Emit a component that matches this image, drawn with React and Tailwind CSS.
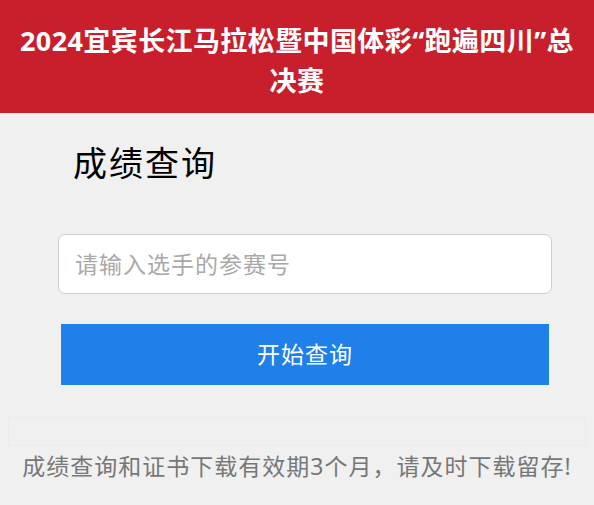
import React from "react";

export default function App() {
  return (
    <div
      className="w-[594px] h-[505px] bg-[#f0f0f0] overflow-hidden"
      style={{ fontFamily: '"Noto Sans", "Noto Sans CJK SC", sans-serif' }}
    >
      {/* Red banner */}
      <header className="bg-[#c91f2d] h-[113px] px-[8px] pt-[21px] text-center">
        <h1 className="text-white font-bold text-[27px] leading-[40px] tracking-[0.4px]">
          2024宜宾长江马拉松暨中国体彩“跑遍四川”总决赛
        </h1>
      </header>

      {/* Query form */}
      <main className="px-[58px]">
        <h2 className="pl-[15px] pt-[26px] text-[34px] leading-[48px] tracking-[2px] text-black">
          成绩查询
        </h2>
        <input
          type="text"
          placeholder="请输入选手的参赛号"
          className="mt-[47px] w-[494px] h-[60px] rounded-[7px] border border-[#cccccc] bg-white px-[16px] text-[23px] tracking-[1px] placeholder:text-[#a9a9a9] outline-none"
        />
        <button className="mt-[30px] ml-[3px] w-[488px] h-[61px] bg-[#1e80e8] text-white text-[23px] tracking-[1px]">
          开始查询
        </button>
      </main>

      {/* Faint band + footer note */}
      <div className="mt-[32px] mx-[8px] h-[29px] border border-[#ebebeb]" />
      <p className="pt-[3px] text-center text-[23px] leading-[34px] tracking-[1px] text-[#777777]">
        成绩查询和证书下载有效期3个月，请及时下载留存!
      </p>
    </div>
  );
}
